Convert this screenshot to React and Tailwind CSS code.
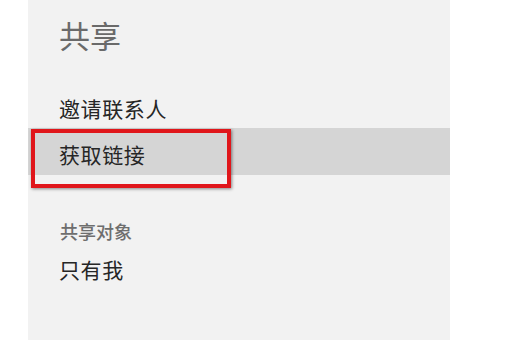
import React from 'react';

const font = { fontFamily: '"Noto Sans CJK SC", "Microsoft YaHei", sans-serif' };

export default function App() {
    return (
        <div className="relative w-[510px] h-[340px] bg-white flex" style={font}>
            <div className="ml-[28px] w-[422px] h-full bg-[#f2f2f2] flex flex-col">
                <h1 className="mt-[20px] pl-[31px] h-[30px] leading-[30px] text-[31px] font-normal text-[#6a6a6a]">共享</h1>

                <div className="mt-[46px] pl-[31px] h-[24px] leading-[24px] text-[21px] tracking-[0.6px] text-[#262626]">邀请联系人</div>

                <div className="mt-[8px] h-[47px] bg-[#d5d5d5] pl-[31px] flex items-center pt-[4px]">
                    <span className="text-[21px] leading-[24px] tracking-[0.6px] text-[#262626]">获取链接</span>
                </div>

                <div className="mt-[45px] pl-[32px] h-[22px] leading-[22px] text-[18px] font-medium text-[#6e6e6e]">共享对象</div>

                <div className="mt-[15px] pl-[31px] h-[24px] leading-[24px] text-[21px] tracking-[0.6px] text-[#262626]">只有我</div>
            </div>

            {/* annotation box */}
            <div className="absolute left-[31px] top-[129px] w-[200px] h-[59px] border-4 border-[#e0161b] shadow-[1px_1px_3px_rgba(0,0,0,0.45)]" />
        </div>
    );
}
